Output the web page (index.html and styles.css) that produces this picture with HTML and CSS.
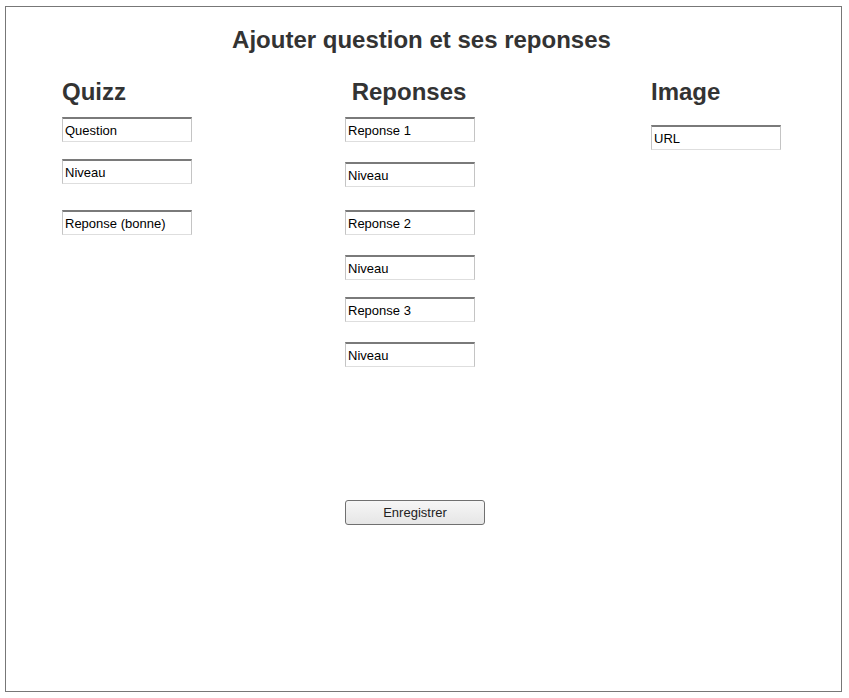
FILE: index.html
```html
<!DOCTYPE html>
<html lang="fr">
<head>
<meta charset="utf-8">
<title>Ajouter question</title>
<link rel="stylesheet" href="styles.css">
</head>
<body>
<div class="frame">
  <h1 class="title">Ajouter question et ses reponses</h1>
  <div class="cols">
    <div class="col col-quizz">
      <h2 class="heading">Quizz</h2>
      <input class="field" type="text" value="Question">
      <input class="field gap-17" type="text" value="Niveau">
      <input class="field gap-26" type="text" value="Reponse (bonne)">
    </div>
    <div class="col col-rep">
      <h2 class="heading center">Reponses</h2>
      <input class="field" type="text" value="Reponse 1">
      <input class="field gap-20" type="text" value="Niveau">
      <input class="field gap-23" type="text" value="Reponse 2">
      <input class="field gap-20" type="text" value="Niveau">
      <input class="field gap-17" type="text" value="Reponse 3">
      <input class="field gap-20" type="text" value="Niveau">
      <button class="btn" type="button">Enregistrer</button>
    </div>
    <div class="col col-img">
      <h2 class="heading">Image</h2>
      <input class="field url" type="text" value="URL">
    </div>
  </div>
</div>
</body>
</html>
```

FILE: styles.css
```css
html, body {
  margin: 0;
  padding: 0;
  background: #fff;
}
body {
  font-family: "Liberation Sans", Arial, sans-serif;
  color: #333;
}
.frame {
  box-sizing: border-box;
  margin: 6px 0 0 5px;
  width: 837px;
  height: 686px;
  border: 1px solid #777;
}
.title {
  margin: 0;
  padding-top: 17px;
  padding-right: 4px;
  height: 31px;
  line-height: 31px;
  font-size: 24px;
  font-weight: bold;
  text-align: center;
  color: #333;
}
.cols {
  display: grid;
  grid-template-columns: 283px 306px 1fr;
  padding-left: 56px;
  margin-top: 22px;
}
.col {
  display: flex;
  flex-direction: column;
  align-items: flex-start;
}
.col-rep {
  width: 130px;
}
.heading {
  margin: 0 0 10px 0;
  height: 30px;
  line-height: 30px;
  font-size: 24px;
  font-weight: bold;
  color: #333;
  align-self: stretch;
}
.center {
  text-align: center;
  padding-right: 2px;
}
.field {
  box-sizing: border-box;
  width: 130px;
  height: 25px;
  margin: 0;
  padding: 1px 2px 0;
  font-family: "Liberation Sans", Arial, sans-serif;
  font-size: 13px;
  color: #000;
  background: #fff;
  border: 1px solid;
  border-color: #7a7a7a #c4c4c4 #dedede #c4c4c4;
  border-top-width: 2px;
  outline: none;
}
.col-img .url {
  margin-top: 8px;
}
.gap-17 { margin-top: 17px; }
.gap-20 { margin-top: 20px; }
.gap-23 { margin-top: 23px; }
.gap-26 { margin-top: 26px; }
.btn {
  box-sizing: border-box;
  margin-top: 133px;
  width: 140px;
  height: 25px;
  padding: 0;
  font-family: "Liberation Sans", Arial, sans-serif;
  font-size: 13px;
  color: #222;
  background: linear-gradient(#f6f6f6, #e6e6e6);
  border: 1px solid #707070;
  border-radius: 3px;
}
```
